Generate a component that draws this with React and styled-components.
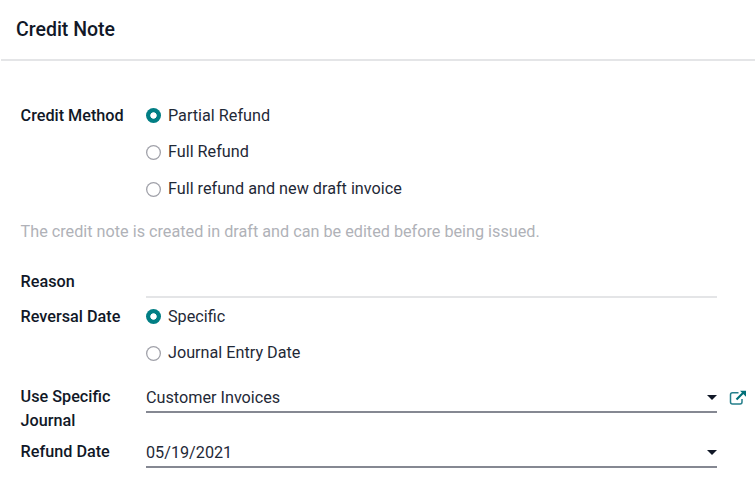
import React from "react";
import styled, { createGlobalStyle } from "styled-components";

const GlobalStyle = createGlobalStyle`
  * { box-sizing: border-box; }
  body { margin: 0; background: #fff; font-family: Roboto, sans-serif; font-size: 16.22px; line-height: 24px; color: #1f2937; }
`;

const Dialog = styled.main`
  width: 755px;
  height: 488px;
  overflow: hidden;
`;
const Header = styled.header`
  height: 61px;
  margin-left: 1px;
  padding: 15px 15px 0;
  border-bottom: 2px solid #e4e5e7;
`;
const Title = styled.h1`
  margin: 0;
  font-size: 19.5px;
  line-height: 30px;
  font-weight: 500;
  color: #111827;
`;
const Form = styled.form`
  padding: 42.5px 8px 0 20.6px;
`;
const Row = styled.div`
  display: grid;
  grid-template-columns: 125.4px 571px 1fr;
  height: ${(p) => p.$height}px;
`;
const Label = styled.label`
  font-weight: 500;
  width: 115px;
  color: #111827;
`;
const Options = styled.div`
  display: flex;
  flex-direction: column;
  gap: 12.75px;
`;
const Option = styled.label`
  display: flex;
  align-items: center;
  gap: 7px;
  height: 24px;
`;
const Radio = styled.span`
  width: 15px;
  height: 15px;
  margin-top: 0.8px;
  border-radius: 50%;
  background: ${(p) => (p.$checked ? "radial-gradient(circle, #fff 2.8px, #017e84 3.6px)" : "#fff")};
  box-shadow: ${(p) => (p.$checked ? "none" : "inset 0 0 0 1.3px #a0a1a9")};
`;
const Hint = styled.p`
  margin: 0 0 26px;
  color: #b0b2b8;
`;
const Field = styled.div`
  display: flex;
  justify-content: space-between;
  align-items: center;
  height: 28.5px;
  padding-bottom: 0.5px;
  border-bottom: 2px solid ${(p) => p.$line};
`;
const Caret = styled.i`
  border: 5px solid transparent;
  border-top-color: #111827;
  border-bottom: 0;
`;
const OpenIcon = styled.svg`
  margin: 5.5px 0 0 12px;
`;

function RadioGroup({ options, selected }) {
  return (
    <Options>
      {options.map((option) => (
        <Option key={option}>
          <Radio $checked={option === selected} />
          {option}
        </Option>
      ))}
    </Options>
  );
}

export default function App() {
  return (
    <Dialog>
      <GlobalStyle />
      <Header><Title>Credit Note</Title></Header>
      <Form>
        <Row $height={116}>
          <Label>Credit Method</Label>
          <RadioGroup selected="Partial Refund" options={["Partial Refund", "Full Refund", "Full refund and new draft invoice"]} />
        </Row>
        <Hint>The credit note is created in draft and can be edited before being issued.</Hint>
        <Row $height={35}>
          <Label>Reason</Label>
          <Field $line="#e4e5e7" />
        </Row>
        <Row $height={80}>
          <Label>Reversal Date</Label>
          <RadioGroup selected="Specific" options={["Specific", "Journal Entry Date"]} />
        </Row>
        <Row $height={55}>
          <Label>Use Specific Journal</Label>
          <Field $line="#858892">Customer Invoices<Caret /></Field>
          <OpenIcon width="18" height="17" viewBox="0 0 18 17" fill="none" stroke="#257f8b" strokeWidth="1.5">
            <path d="M9.5 2.7H3.5Q1.5 2.7 1.5 4.7v7.3q0 2 2 2h7.5q2 0 2-2V9" />
            <path d="M7.5 9.5 14 3" stroke="#017078" strokeWidth="2.2" />
            <path d="M11 .7h6v6z" fill="#017078" stroke="none" />
          </OpenIcon>
        </Row>
        <Row $height={30}>
          <Label>Refund Date</Label>
          <Field $line="#858892">05/19/2021<Caret /></Field>
        </Row>
      </Form>
    </Dialog>
  );
}
